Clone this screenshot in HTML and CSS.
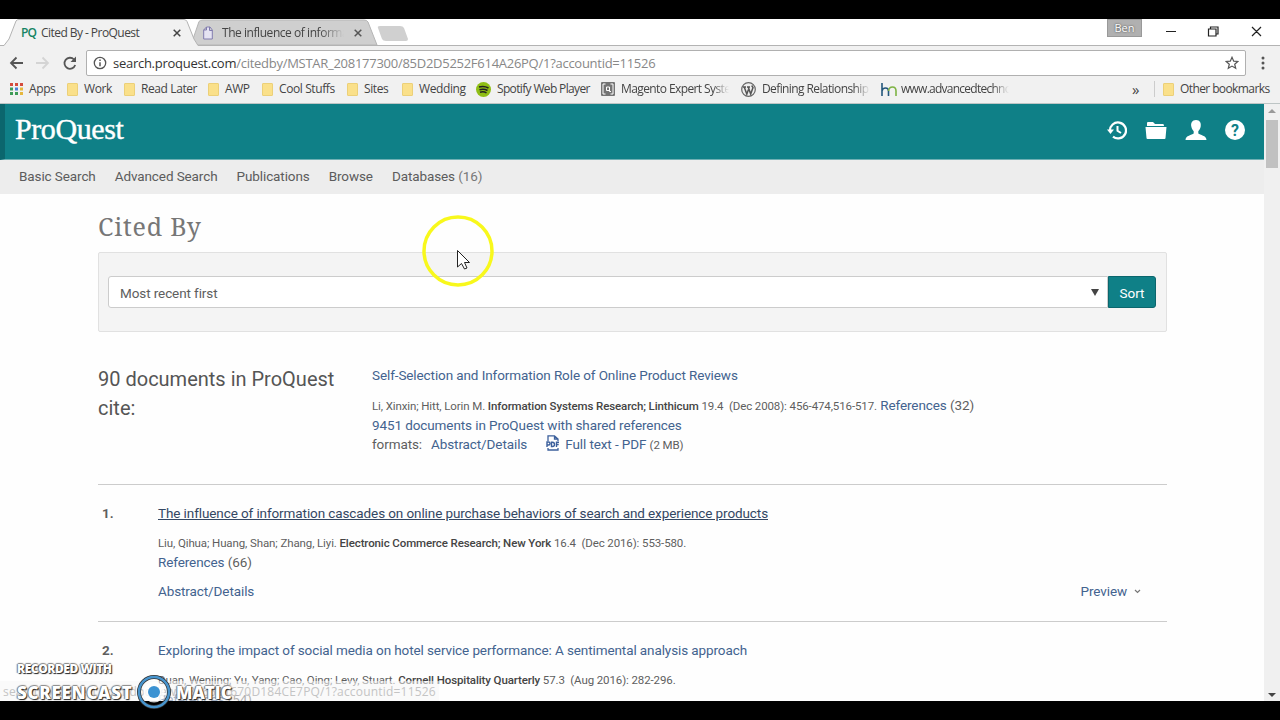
FILE: index.html
```
<!DOCTYPE html>
<html lang="en">
<head>
    <meta charset="utf-8">
    <title>Cited By - ProQuest</title>
    <link rel="stylesheet" href="styles.css">
</head>
<body>
    <!-- Browser tabs -->
    <div class="tab-strip">
        <svg class="tab-shapes" width="420" height="27" viewBox="0 0 420 27">
            <path d="M191 26L199 2.500Q200 1 203 1H364Q367 1 368 3L377 26Z" fill="#cfcfcf" stroke="#b5b5b5"/>
            <path d="M378 9Q377 7 380 7H400Q403 7 404 9L408 20Q408 22 406 22H386Q383 22 382 20Z" fill="#d0d0d0"/>
            <path d="M0 26.500H4L9 20L16 2Q17 .5 19 .5H184Q186 .5 187 2.500L194 20L198 26.500H420V28H0Z" fill="#f1f1f1" stroke="#b3b3b3"/>
        </svg>
        <div class="tab tab-one">
            <span class="tab-logo">PQ</span>
            <span class="tab-title">Cited By - ProQuest</span>
            <svg width="8" height="8" viewBox="0 0 8 8"><path d="M.7.7L7.300 7.300M7.300.7L.7 7.300" stroke="#444" stroke-width="1.500"/></svg>
        </div>
        <div class="tab tab-two">
            <svg width="10" height="14" viewBox="0 0 10 14"><path d="M3.500 1H7L9.300 4V13H.7V4H3.500ZM3.500 1L.7 4M6.500 1V4.500H9.300" fill="#e5e3f2" stroke="#817cae"/></svg>
            <span class="tab-title">The influence of informa</span>
            <svg width="8" height="8" viewBox="0 0 8 8"><path d="M.7.7L7.300 7.300M7.300.7L.7 7.300" stroke="#555" stroke-width="1.500"/></svg>
        </div>
        <div class="window-buttons">
            <span class="user">Ben</span>
            <svg width="92" height="14" viewBox="0 0 92 14" fill="none" stroke="#222" stroke-width="1.200"><path d="M0 7.500H10M42.500 5H50V12H42.500ZM44.500 5V3H52V10H50M86 3L95 12M95 3L86 12"/></svg>
        </div>
    </div>

    <!-- Address bar -->
    <div class="toolbar">
        <svg class="nav-icons" width="70" height="16" viewBox="0 0 70 16" fill="none" stroke-width="1.800">
            <path d="M14 8H2M7.500 2.500L2 8L7.500 13.500" stroke="#555"/>
            <path d="M27 8H39M33.500 2.500L39 8L33.500 13.500" stroke="#d4d4d4"/>
            <path d="M65 4.500A5.500 5.500 0 1 0 66.200 10" stroke="#555"/><path d="M67 1.500V7H61.500Z" fill="#555"/>
        </svg>
        <div class="address">
            <svg width="14" height="14" viewBox="0 0 14 14"><circle cx="7" cy="7" r="5.700" fill="none" stroke="#555" stroke-width="1.300"/><path d="M7 6.200V10.300M7 3.600V5" stroke="#555" stroke-width="1.500"/></svg>
            <span class="url"><b>search.proquest.com</b>/citedby/MSTAR_208177300/85D2D5252F614A26PQ/1?accountid=11526</span>
            <svg class="star" width="14" height="14" viewBox="0 0 14 14"><path d="M7 1.300L8.700 5.200L12.800 5.500L9.700 8.200L10.700 12.300L7 10.100L3.300 12.300L4.300 8.200L1.200 5.500L5.300 5.200Z" fill="none" stroke="#555" stroke-width="1.200"/></svg>
        </div>
        <svg class="more" width="4" height="14" viewBox="0 0 4 14" fill="#555"><circle cx="2" cy="2" r="1.500"/><circle cx="2" cy="7" r="1.500"/><circle cx="2" cy="12" r="1.500"/></svg>
    </div>

    <div class="bookmarks">
        <div class="bookmark">
            <svg width="13" height="12" viewBox="0 0 13 12"><path d="M0 0H3V3H0ZM5 0H8V3H5Z" fill="#d44c3d"/><path d="M10 0H13V3H10Z" fill="#d44c3d"/><path d="M0 4.500H3V7.500H0Z" fill="#3e9b58"/><path d="M5 4.500H8V7.500H5Z" fill="#4a80d6"/><path d="M10 4.500H13V7.500H10ZM10 9H13V12H10Z" fill="#e6b73d"/><path d="M0 9H3V12H0ZM5 9H8V12H5Z" fill="#3e9b58"/></svg>
            <span>Apps</span>
        </div>
        <div class="bookmark"><i class="folder"></i><span>Work</span></div>
        <div class="bookmark"><i class="folder"></i><span>Read Later</span></div>
        <div class="bookmark"><i class="folder"></i><span>AWP</span></div>
        <div class="bookmark"><i class="folder"></i><span>Cool Stuffs</span></div>
        <div class="bookmark"><i class="folder"></i><span>Sites</span></div>
        <div class="bookmark"><i class="folder"></i><span>Wedding</span></div>
        <div class="bookmark">
            <svg width="15" height="15" viewBox="0 0 15 15"><circle cx="7.500" cy="7.500" r="7.500" fill="#8fbe16"/><path d="M3 5Q8 3.500 12.500 6M3.500 7.700Q8 6.300 11.500 8.500M4 10.200Q7.500 9 10.500 10.800" fill="none" stroke="#222" stroke-width="1.500"/></svg>
            <span class="spotify">Spotify Web Player</span>
        </div>
        <div class="bookmark fade">
            <svg width="14" height="14" viewBox="0 0 14 14"><rect width="14" height="14" rx="1" fill="#747474"/><path d="M4.500 2H2V12H4.500M9.500 2H12V12H9.500M8.500 8.500H5.500V5H8.500V9.500H10" fill="none" stroke="#fff"/></svg>
            <span>Magento Expert Syste</span>
        </div>
        <div class="bookmark fade">
            <svg width="15" height="15" viewBox="0 0 15 15"><circle cx="7.500" cy="7.500" r="6.800" fill="#eee" stroke="#666" stroke-width="1.200"/><path d="M2 5H5M3.200 5L5.800 12L7.500 7.500M6 5H9M7.200 5L9.700 12L12 5.500L10.700 3.500" fill="none" stroke="#555" stroke-width="1.500"/></svg>
            <span>Defining Relationship</span>
        </div>
        <div class="bookmark fade">
            <svg width="16" height="15" viewBox="0 0 16 15" fill="none" stroke-width="1.600"><path d="M1 1V14M1 9Q1.500 6 4.500 6Q7.500 6 7.500 9V14" stroke="#24577c"/><path d="M7.500 9Q8 5 11.500 5Q15 5 15 9V14" stroke="#7eb344"/></svg>
            <span class="tight">www.advancedtechno</span>
        </div>
        <div class="bookmark chevrons"><span>»</span></div>
        <div class="bookmark other"><i class="folder"></i><span>Other bookmarks</span></div>
    </div>

    <!-- Page -->
    <div class="viewport">
        <div class="page">
            <header class="header">
                <div class="logo">ProQuest</div>
                <div class="header-icons">
                    <svg width="20" height="20" viewBox="0 0 20 20"><path d="M3 11A8 8 0 1 1 6 16.700" fill="none" stroke="#fff" stroke-width="2.300"/><path d="M0 9.500H7L3.500 14Z" fill="#fff"/><path d="M10.500 6V10.800L14 13" fill="none" stroke="#fff" stroke-width="2"/></svg>
                    <svg width="22" height="20" viewBox="0 0 22 20" fill="#fff"><path d="M2 6V3Q2 2 3 2H8L10 4H18Q19 4 19 6Z"/><path d="M.5 7H21.500L20.500 18Q20.500 19 19.500 19H2.500Q1.500 19 1.500 18Z"/></svg>
                    <svg width="22" height="22" viewBox="0 0 22 22"><path d="M11 1C15 1 16.300 4 15.700 7.500C15.300 10 14.300 11 13.300 12.300V14.500C15 16 21.500 16.500 21.500 21H.5C.5 16.500 7 16 8.700 14.500V12.300C7.700 11 6.700 10 6.300 7.500C5.700 4 7 1 11 1Z" fill="#fff"/></svg>
                    <div class="help">?</div>
                </div>
            </header>
            <nav class="menu">
                <a>Basic Search</a>
                <a>Advanced Search</a>
                <a>Publications</a>
                <a>Browse</a>
                <a>Databases <span>(16)</span></a>
            </nav>

            <main class="content">
                <h1>Cited By</h1>
                <div class="sort-box">
                    <div class="select">Most recent first <i class="arrow"></i></div>
                    <div class="sort-button">Sort</div>
                </div>

                <section class="source">
                    <h2>90 documents in ProQuest cite:</h2>
                    <div class="source-info">
                        <a class="title">Self-Selection and Information Role of Online Product Reviews</a>
                        <p class="cite-line"><span class="cite">Li, Xinxin; Hitt, Lorin M. <b>Information Systems Research; Linthicum</b> 19.4 &nbsp;(Dec 2008): 456-474,516-517.</span> <a>References</a> (32)</p>
                        <p><a>9451 documents in ProQuest with shared references</a></p>
                        <p class="formats">formats: <a>Abstract/Details</a>
                            <svg width="14" height="16" viewBox="0 0 14 16"><path d="M2 6V.8H8.500L12 4V6M8.500 1V4H12M2 13V15H12V13" fill="none" stroke="#3c609c" stroke-width="1.300"/><path d="M1 12V7H2.500Q4 7 4 8.500Q4 10 2.500 10H1M5.500 7.300V11.500H6.500Q8.500 11.500 8.500 9.500Q8.500 7.300 6.500 7.300ZM10.500 12V7.300H13M10.500 9.500H12.700" fill="none" stroke="#3c609c" stroke-width="1.400"/></svg>
                            <span><a>Full text - PDF</a> <small>(2 MB)</small></span></p>
                    </div>
                </section>

                <article class="result">
                    <div class="number">1.</div>
                    <div class="result-info">
                        <a class="title visited">The influence of information cascades on online purchase behaviors of search and experience products</a>
                        <p class="cite-line cite">Liu, Qihua; Huang, Shan; Zhang, Liyi. <b>Electronic Commerce Research; New York</b> 16.4 &nbsp;(Dec 2016): 553-580.</p>
                        <p><a>References</a> (66)</p>
                        <div class="actions">
                            <a>Abstract/Details</a>
                            <a class="preview">Preview <svg width="7" height="5" viewBox="0 0 7 5"><path d="M1 1L3.500 3.500L6 1" fill="none" stroke="#777" stroke-width="1.200"/></svg></a>
                        </div>
                    </div>
                </article>

                <article class="result">
                    <div class="number">2.</div>
                    <div class="result-info">
                        <a class="title">Exploring the impact of social media on hotel service performance: A sentimental analysis approach</a>
                        <p class="cite-line cite">Duan, Wenjing; Yu, Yang; Cao, Qing; Levy, Stuart. <b>Cornell Hospitality Quarterly</b> 57.3 &nbsp;(Aug 2016): 282-296.</p>
                        <p><a>References</a> (54)</p>
                    </div>
                </article>
            </main>
        </div>
        <div class="scrollbar">
            <i class="up"></i>
            <i class="thumb"></i>
            <i class="down"></i>
        </div>
        <div class="status">search.proquest.com/docview/1826591670D184CE7PQ/1?accountid=11526</div>
    </div>

    <!-- Recorder watermark -->
    <div class="watermark">
        <div class="recorded">RECORDED WITH</div>
        <div class="brand">
            <span class="screencast">SCREENCAST</span>
            <svg width="36" height="36" viewBox="0 0 36 36"><circle cx="18" cy="18" r="15" fill="none" stroke="#333" stroke-width="4"/><circle cx="18" cy="18" r="15" fill="none" stroke="#4794cd" stroke-width="2.500"/><circle cx="18" cy="18" r="10.500" fill="#fff" fill-opacity=".8"/><circle cx="18" cy="18" r="6" fill="#3b92d2"/></svg>
            <span class="matic">MATIC</span>
        </div>
    </div>

    <!-- Cursor highlight -->
    <svg class="cursor" width="72" height="72" viewBox="0 0 72 72">
        <circle cx="36" cy="36" r="34" fill="none" stroke="#f8f81c" stroke-width="3.500"/>
        <path d="M35.500 35.500V52L39.500 48.500L42.500 54L45 53L42.500 47.500H47.500Z" fill="#fff" stroke="#222"/>
    </svg>
</body>
</html>
```
FILE: styles.css
```
* {
    box-sizing: border-box;
}

body {
    margin: 0;
    padding: 19px 0;
    height: 720px;
    overflow: hidden;
    background: #000;
    font-family: Roboto, "Liberation Sans", sans-serif;
    font-size: 13.5px;
    color: #5e5e5e;
}

svg {
    display: block;
    flex: none;
}

p, h1, h2 {
    margin: 0;
    font-weight: normal;
}

/* Browser tabs */
.tab-strip {
    position: relative;
    display: flex;
    height: 27px;
    background: #fff;
    border-bottom: 1px solid #b3b3b3;
    font-family: "Open Sans", sans-serif;
    font-size: 12px;
    color: #444;
}

.tab-shapes {
    position: absolute;
    left: 0;
    top: 0;
}

.tab {
    position: relative;
    display: flex;
    align-items: center;
    height: 27px;
}

.tab-one {
    width: 182px;
    margin-left: 21px;
}

.tab-logo {
    width: 20px;
    color: #168463;
    letter-spacing: -1px;
    font-weight: 600;
}

.tab-title {
    flex: none;
    width: 132px;
    letter-spacing: -0.55px;
    white-space: nowrap;
}

.tab-two .tab-title {
    width: 122px;
    margin: 0 10px 0 9px;
    letter-spacing: -0.45px;
    -webkit-mask-image: linear-gradient(to right, #000 80%, transparent 100%);
}

.window-buttons {
    display: flex;
    margin-left: auto;
    padding-right: 22px;
}

.window-buttons svg {
    margin: 5px 0 0 24px;
    overflow: visible;
}

.user {
    width: 35px;
    height: 18px;
    background: #b0b0b0;
    border: 1px solid #999;
    color: #fff;
    font-size: 11px;
    line-height: 15px;
    text-align: center;
    text-shadow: 0 0 2px #333;
}

/* Address bar */
.toolbar {
    display: flex;
    align-items: center;
    height: 34px;
    padding-left: 9px;
    background: #f1f1f1;
}

.address {
    display: flex;
    align-items: center;
    width: 1160px;
    height: 26px;
    margin-left: 7px;
    padding: 0 6px;
    background: #fff;
    border: 1px solid #b0b0b0;
    border-radius: 2px;
}

.url {
    margin-left: 6px;
    font-family: "Open Sans", sans-serif;
    font-size: 13px;
    color: #888;
    letter-spacing: -0.27px;
}

.url b {
    color: #333;
    font-weight: normal;
}

.star {
    margin-left: auto;
}

.more {
    margin-left: 15px;
}

/* Bookmarks */
.bookmarks {
    display: grid;
    grid-template-columns: 57px 57px 84px 54px 85px 55px 74px 125px 140px 140px 251px 22px 1fr;
    height: 24px;
    padding: 0 0 5px 10px;
    background: #f1f1f1;
    border-bottom: 1px solid #bdc5c5;
    align-items: center;
    font-family: "Open Sans", sans-serif;
    font-size: 12px;
    line-height: 16px;
    color: #444;
    letter-spacing: -0.4px;
    white-space: nowrap;
}

.bookmark {
    display: flex;
    align-items: center;
    gap: 6px;
}

.spotify {
    letter-spacing: -0.65px;
}

.fade span {
    width: 108px;
    letter-spacing: -0.6px;
    -webkit-mask-image: linear-gradient(to right, #000 85%, transparent 100%);
}

.fade .tight {
    margin-left: -2px;
    letter-spacing: -0.75px;
}

.folder {
    width: 11px;
    height: 13px;
    background: #fae08a;
    border: 1px solid #ecd078;
    border-radius: 1px;
}

.chevrons {
    font-size: 15px;
}

.other {
    border-left: 1px solid #ccc;
    padding-left: 8px;
    letter-spacing: -0.6px;
}

/* Page */
.viewport {
    position: relative;
    display: flex;
    height: 597px;
    background: #fefefe;
    overflow: hidden;
}

.page {
    width: 1264px;
    height: 597px;
    overflow: hidden;
}

.header {
    display: flex;
    align-items: center;
    justify-content: space-between;
    height: 56px;
    padding: 0 19px 4px 10px;
    background: #0f8087;
    border-left: 5px solid #0b666d;
    border-bottom: 1px solid #6fb0b4;
}

.logo {
    font-family: "Liberation Serif", serif;
    font-size: 30px;
    line-height: 28px;
    padding-bottom: 1px;
    letter-spacing: -0.4px;
    color: #fff;
    -webkit-text-stroke: 0.4px #fff;
}

.header-icons {
    display: flex;
    align-items: center;
    gap: 18px;
}

.help {
    width: 20px;
    height: 20px;
    border-radius: 50%;
    background: #fff;
    color: #0f8087;
    font-size: 16px;
    font-weight: bold;
    line-height: 21px;
    text-align: center;
}

.menu {
    display: flex;
    gap: 19px;
    height: 34px;
    padding-left: 19px;
    background: #ededed;
    line-height: 33px;
    color: #5c5c5c;
}

.menu span {
    color: #777;
}

.content {
    width: 1069px;
    margin-left: 98px;
    line-height: 20px;
}

.content a {
    color: #43638f;
}

h1 {
    padding-top: 14px;
    height: 58px;
    font-family: "Roboto Slab", "Noto Serif", "DejaVu Serif", serif;
    font-size: 25px;
    line-height: 36px;
    letter-spacing: 0.8px;
    color: #777;
}

.sort-box {
    display: flex;
    height: 80px;
    padding: 23px 10px 23px 9px;
    background: #f4f4f4;
    border: 1px solid #e1e1e1;
    border-radius: 2px;
}

.select {
    display: flex;
    flex: 1;
    align-items: center;
    justify-content: space-between;
    padding: 1px 8px 0 11px;
    background: #fff;
    border: 1px solid #ccc;
    border-radius: 3px 0 0 3px;
}

.arrow {
    border: 4px solid transparent;
    border-top: 7px solid #444;
    border-bottom: 0;
}

.sort-button {
    width: 48px;
    background: #0f8087;
    border: 1px solid #0b666d;
    border-radius: 0 3px 3px 0;
    color: #fff;
    line-height: 32px;
    text-align: center;
}

/* Results */
.source {
    display: flex;
    height: 153px;
    padding-top: 33px;
    border-bottom: 1px solid #ccc;
}

h2 {
    width: 274px;
    font-size: 20px;
    line-height: 29px;
    color: #555;
}

.menu, .select, .source-info, .result-info {
    letter-spacing: -0.1px;
}

.source-info {
    white-space: nowrap;
}

.title {
    display: block;
}

.cite-line {
    margin-top: 10px;
}

.cite {
    font-size: 11.5px;
    letter-spacing: -0.11px;
}

.cite b {
    font-weight: 500;
    color: #444;
}

.source-info p {
    height: 19.500px;
}

.formats {
    display: flex;
    gap: 9px;
}

.formats svg {
    margin: 1px -4px 0 10px;
}

small {
    font-size: 11.5px;
}

.result {
    display: flex;
    height: 137px;
    padding-top: 18px;
    border-bottom: 1px solid #ccc;
}

.number {
    width: 60px;
    padding-left: 4px;
    font-weight: 700;
}

.result-info {
    flex: 1;
    white-space: nowrap;
}

.result-info p {
    height: 19px;
}

.result-info .visited {
    width: max-content;
    color: #344763;
    text-decoration: underline;
}

.actions {
    display: flex;
    justify-content: space-between;
    margin-top: 10px;
    padding-right: 26px;
}

.preview {
    display: flex;
    align-items: center;
    gap: 7px;
}

/* Scrollbar */
.scrollbar {
    display: flex;
    flex-direction: column;
    align-items: center;
    width: 16px;
    padding: 5px 0 4px;
    background: #f0f0f0;
}

.up {
    border: 4px solid transparent;
    border-bottom: 4px solid #999;
    border-top: 0;
}

.down {
    margin-top: auto;
    border: 4px solid transparent;
    border-top: 4px solid #444;
    border-bottom: 0;
}

.thumb {
    width: 12px;
    height: 48px;
    margin-top: 7px;
    background: #c1c1c1;
}

/* Link address over the page */
.status {
    position: absolute;
    left: 0;
    bottom: 0;
    width: 439px;
    height: 20px;
    padding-left: 3px;
    background: rgba(245, 245, 245, 0.55);
    font-family: "Open Sans", sans-serif;
    font-size: 12px;
    line-height: 21px;
    letter-spacing: 0.19px;
    color: #c4c4c4;
    white-space: nowrap;
}

.watermark {
    position: absolute;
    left: 17px;
    top: 660px;
    font-family: "Open Sans", sans-serif;
    font-weight: 800;
    color: #fff;
    text-shadow: 1px 1px 1px #222, -1px 0 1px #777, 0 -1px 1px #888;
}

.recorded {
    font-size: 12px;
    line-height: 17px;
    letter-spacing: -0.45px;
}

.brand {
    display: flex;
    align-items: center;
    height: 30px;
    font-size: 17px;
}

.screencast {
    width: 119px;
    letter-spacing: 0.7px;
}

.brand svg {
    margin-right: 4px;
}

.cursor {
    position: absolute;
    left: 422px;
    top: 215px;
}
```
